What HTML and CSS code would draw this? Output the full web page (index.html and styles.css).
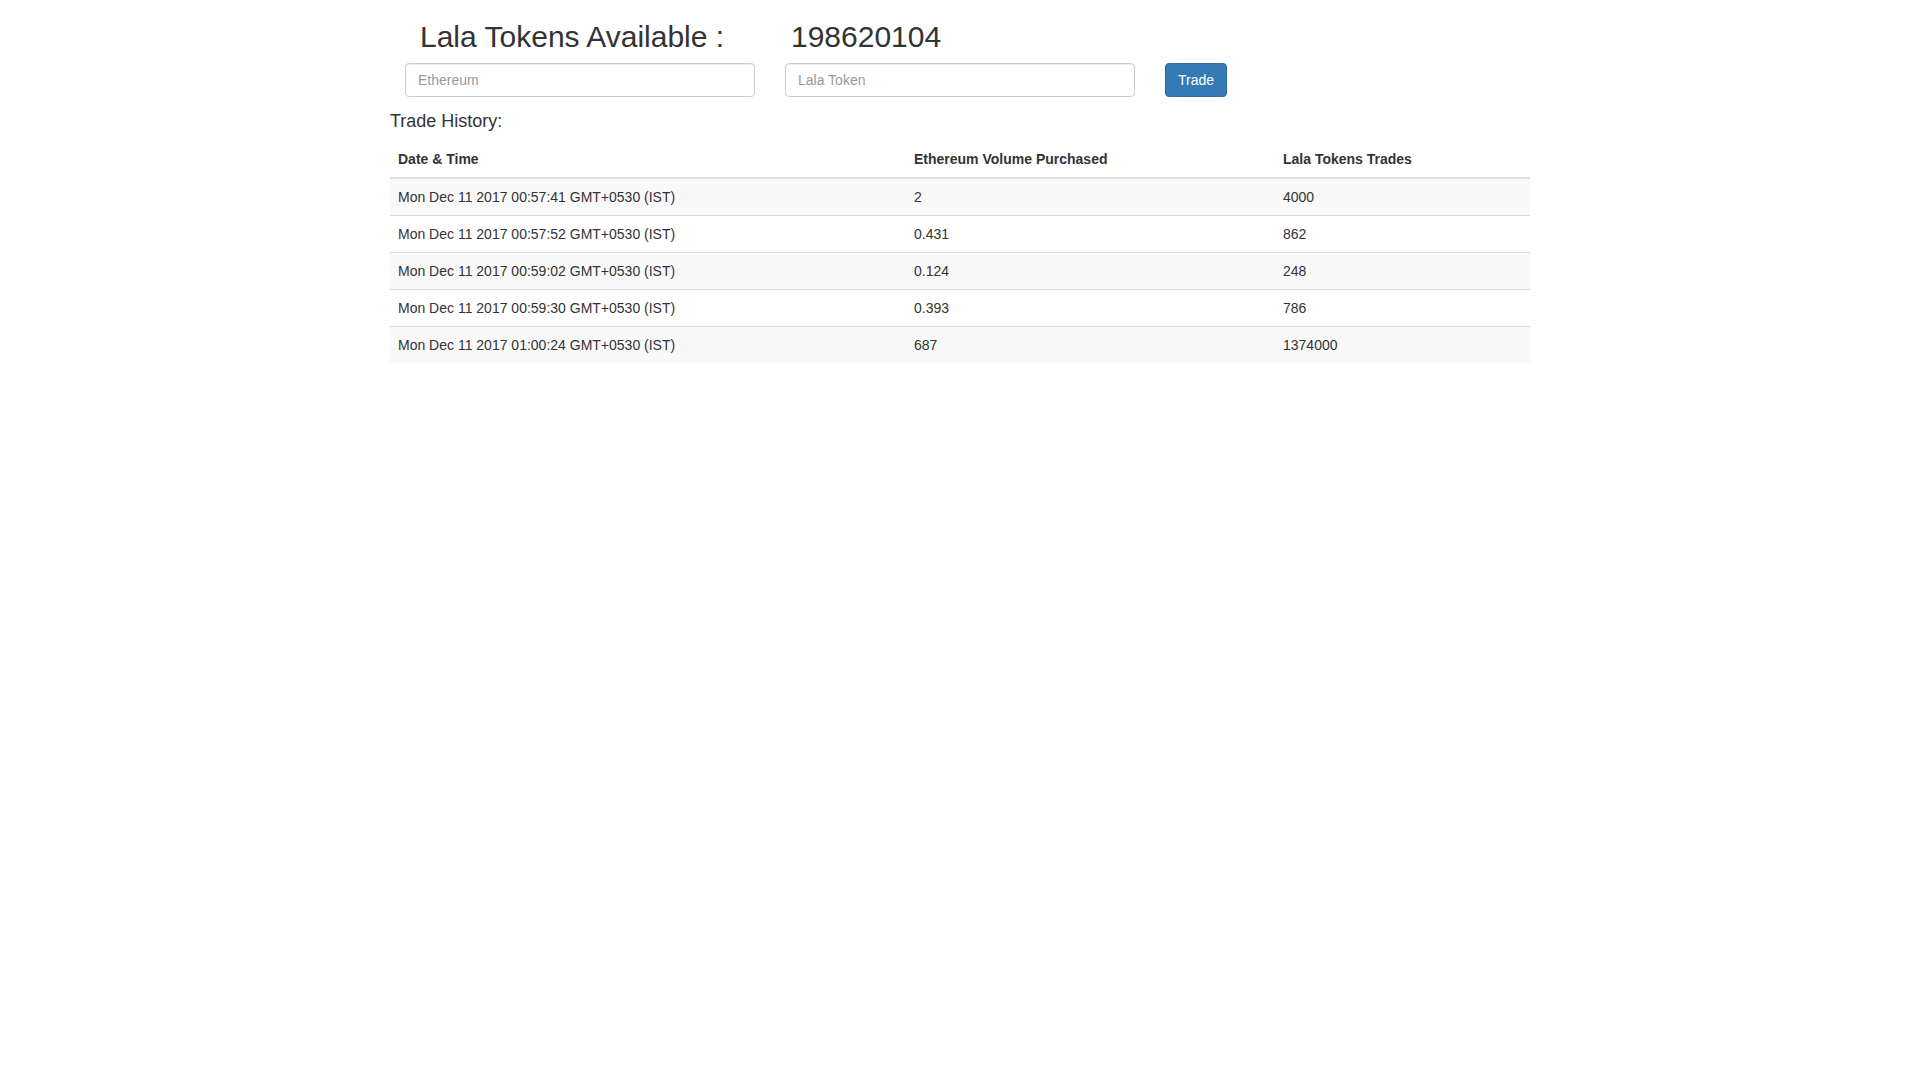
FILE: index.html
```html
<!DOCTYPE html>
<html lang="en">
<head>
<meta charset="utf-8">
<title>Lala Tokens</title>
<link rel="stylesheet" href="styles.css">
</head>
<body>
<div class="container">
  <div class="balance-row">
    <h2 class="balance-title">Lala Tokens Available :</h2>
    <h2 class="balance-amount">198620104</h2>
  </div>
  <div class="trade-form">
    <div class="cell"><input class="form-control" type="text" placeholder="Ethereum"></div>
    <div class="cell"><input class="form-control" type="text" placeholder="Lala Token"></div>
    <div class="cell"><button class="btn-primary" type="button">Trade</button></div>
  </div>
  <h4 class="history-title">Trade History:</h4>
  <table class="history">
    <thead>
      <tr>
        <th class="col-date">Date &amp; Time</th>
        <th class="col-eth">Ethereum Volume Purchased</th>
        <th class="col-lala">Lala Tokens Trades</th>
      </tr>
    </thead>
    <tbody>
      <tr><td>Mon Dec 11 2017 00:57:41 GMT+0530 (IST)</td><td>2</td><td>4000</td></tr>
      <tr><td>Mon Dec 11 2017 00:57:52 GMT+0530 (IST)</td><td>0.431</td><td>862</td></tr>
      <tr><td>Mon Dec 11 2017 00:59:02 GMT+0530 (IST)</td><td>0.124</td><td>248</td></tr>
      <tr><td>Mon Dec 11 2017 00:59:30 GMT+0530 (IST)</td><td>0.393</td><td>786</td></tr>
      <tr><td>Mon Dec 11 2017 01:00:24 GMT+0530 (IST)</td><td>687</td><td>1374000</td></tr>
    </tbody>
  </table>
</div>
</body>
</html>
```
FILE: styles.css
```css
* {
  box-sizing: border-box;
}

html, body {
  margin: 0;
  padding: 0;
  background: #fff;
}

body {
  font-family: "Liberation Sans", Arial, Helvetica, sans-serif;
  font-size: 14px;
  line-height: 1.42857;
  color: #333;
}

.container {
  width: 1170px;
  margin: 0 auto;
  padding: 0 15px;
}

.balance-row {
  display: grid;
  grid-template-columns: 380px 380px 380px;
}

.balance-row h2 {
  margin: 20px 0 10px;
  font-size: 30px;
  line-height: 1.1;
  font-weight: 500;
  white-space: nowrap;
}

.balance-title {
  padding-left: 30px;
}

.balance-amount {
  padding-left: 21px;
}

.trade-form {
  display: grid;
  grid-template-columns: 380px 380px 380px;
}

.trade-form .cell {
  padding: 0 15px;
}

.form-control {
  display: block;
  width: 100%;
  height: 34px;
  padding: 6px 12px;
  font-family: inherit;
  font-size: 14px;
  line-height: 1.42857;
  color: #555;
  background: #fff;
  border: 1px solid #ccc;
  border-radius: 4px;
  box-shadow: inset 0 1px 1px rgba(0, 0, 0, 0.075);
  outline: none;
}

.form-control::placeholder {
  color: #999;
}

.btn-primary {
  display: inline-block;
  height: 34px;
  padding: 7px 12px 5px;
  font-family: inherit;
  font-size: 14px;
  line-height: 1.42857;
  color: #fff;
  background: #337ab7;
  border: 1px solid #2e6da4;
  border-radius: 4px;
  cursor: pointer;
}

.history-title {
  margin: 15px 0 9px;
  font-size: 18px;
  line-height: 1.1;
  font-weight: 500;
}

.history {
  width: 100%;
  table-layout: fixed;
  border-collapse: collapse;
  border-spacing: 0;
}

.history th,
.history td {
  padding: 8px;
  line-height: 20px;
  text-align: left;
  vertical-align: top;
}

.history th {
  font-weight: bold;
  vertical-align: bottom;
  border-bottom: 2px solid #ddd;
}

.history td {
  border-top: 1px solid #ddd;
}

.history tbody tr:nth-child(odd) {
  background: #f9f9f9;
}

.col-date {
  width: 516px;
}

.col-eth {
  width: 369px;
}
```
